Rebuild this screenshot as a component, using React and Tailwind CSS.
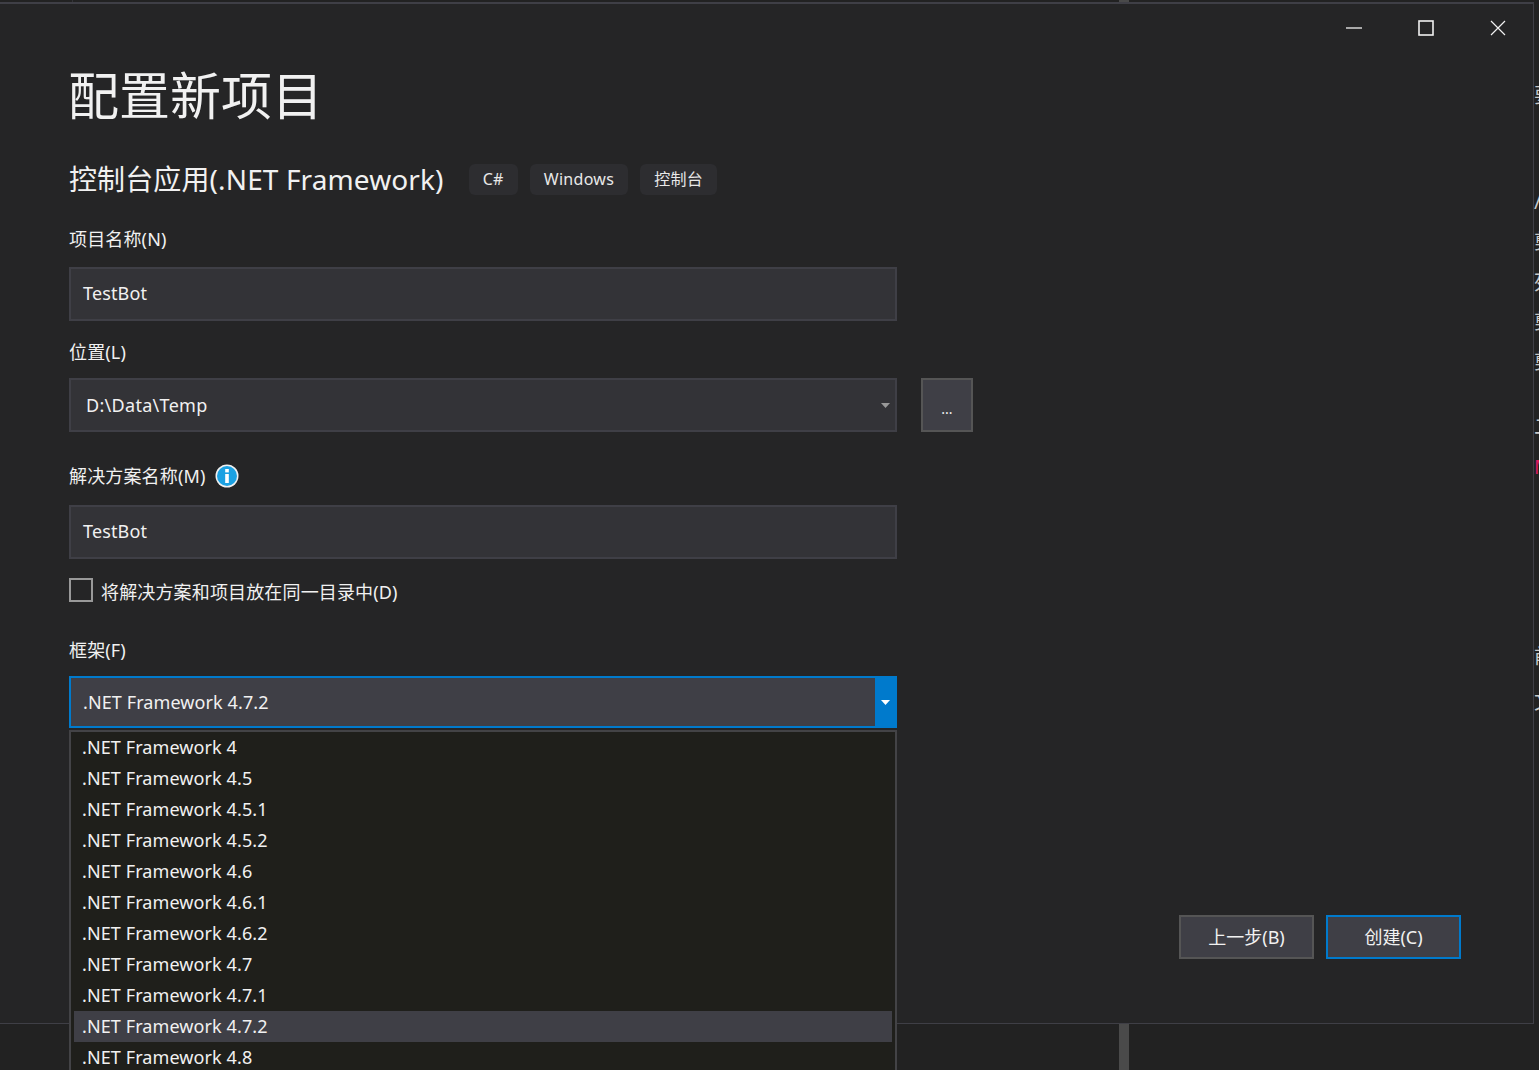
import React from "react";

const FONT = { fontFamily: '"Noto Sans", "Noto Sans CJK SC", sans-serif' };
const frameworks = ["4", "4.5", "4.5.1", "4.5.2", "4.6", "4.6.1", "4.6.2", "4.7", "4.7.1", "4.7.2", "4.8"];
const strip = [
  ["要", 84, "text-[#c8c8c8]"], ["/", 190, "text-[#c8c8c8]"], ["剪", 230, "text-[#c8c8c8]"], ["死", 271, "text-[#c8c8c8]"],
  ["剪", 310, "text-[#c8c8c8]"], ["剪", 350, "text-[#c8c8c8]"], ["二", 415, "text-[#c8c8c8]"], ["M", 455, "text-[#d81b60]"],
  ["前", 645, "text-[#c8c8c8]"], ["文", 690, "text-[#c8c8c8]"],
];

function Field({ children, right }) {
  return (
    <div className="h-[54px] w-[828px] border-2 border-[#3f3f46] bg-[#333337] flex items-center justify-between text-[18px] tracking-[0.15px] text-[#f1f1f1] pl-[12px] pr-[5px]">
      <span className="leading-none">{children}</span>
      {right}
    </div>
  );
}

function Label({ children }) {
  return <div className="h-[28px] text-[18px] leading-[28px] tracking-[0.15px] text-[#f1f1f1]">{children}</div>;
}

function Tag({ children }) {
  return <span className="h-[31px] flex items-center rounded-[6px] bg-[#2d2d30] px-[14px] text-[16px] tracking-[0.3px] text-[#e8e8e8]">{children}</span>;
}

function Caret({ color }) {
  return (
    <svg width="9" height="5" viewBox="0 0 9 5" className="shrink-0">
      <path d="M0 0H9L4.5 5Z" fill={color} />
    </svg>
  );
}

export default function App() {
  return (
    <div style={FONT} className="relative h-[1070px] w-full overflow-hidden bg-[#222222]">
      <div className="h-[2px] flex bg-[#222222]">
        <div className="ml-[72px] w-px bg-[#333337]" />
        <div className="ml-[1046px] w-[10px] bg-[#4a4a4a]" />
      </div>
      <div className="flex">
        <div className="relative h-[1022px] w-[1534px] shrink-0 border-t-2 border-r border-b border-[#3f3f46] bg-[#252526] pl-[69px] flex flex-col">
          <div className="absolute -right-px top-[6px] flex items-center text-[#f1f1f1]">
            <button className="w-[72px] h-[36px] flex items-center justify-center">
              <svg width="16" height="16" viewBox="0 0 16 16"><path d="M0 8H16" stroke="#f1f1f1" strokeWidth="1.3" /></svg>
            </button>
            <button className="w-[72px] h-[36px] flex items-center justify-center">
              <svg width="16" height="16" viewBox="0 0 16 16"><rect x="1" y="1" width="14" height="14" fill="none" stroke="#f1f1f1" strokeWidth="1.6" /></svg>
            </button>
            <button className="w-[72px] h-[36px] flex items-center justify-center">
              <svg width="16" height="16" viewBox="0 0 16 16"><path d="M1 1L15 15M15 1L1 15" stroke="#f1f1f1" strokeWidth="1.2" /></svg>
            </button>
          </div>

          <h1 className="mt-[55px] h-[72px] text-[51px] leading-[72px] text-[#f1f1f1] -ml-px">配置新项目</h1>

          <div className="mt-[28px] h-[40px] flex items-center">
            <span className="text-[28px] leading-[40px] tracking-[0.12px] text-[#f1f1f1]">控制台应用(.NET Framework)</span>
            <div className="ml-[25px] flex gap-[12px]">
              <Tag>C#</Tag>
              <Tag>Windows</Tag>
              <Tag>控制台</Tag>
            </div>
          </div>

          <div className="mt-[26px]"><Label>项目名称(N)</Label></div>
          <div className="mt-[14px]"><Field><span className="block mb-[2px]">TestBot</span></Field></div>

          <div className="mt-[17px]"><Label>位置(L)</Label></div>
          <div className="mt-[12px] flex items-center gap-[24px]">
            <Field right={<Caret color="#999999" />}><span className="ml-[3px] tracking-[0.3px]">D:\Data\Temp</span></Field>
            <div className="h-[54px] w-[52px] border-2 border-[#555555] bg-[#3f3f46] flex items-center justify-center text-[14px] text-[#f1f1f1] pt-[6px]">...</div>
          </div>

          <div className="mt-[30px] flex items-center gap-[10px]">
            <Label>解决方案名称(M)</Label>
            <svg width="24" height="24" viewBox="0 0 24 24" className="shrink-0">
              <circle cx="12" cy="12" r="11.5" fill="#f1f1f1" />
              <circle cx="12" cy="12" r="10" fill="#1ba1e2" />
              <rect x="10.2" y="5" width="3.6" height="3.4" fill="#ffffff" />
              <rect x="10.2" y="10" width="3.6" height="9" fill="#ffffff" />
            </svg>
          </div>
          <div className="mt-[15px]"><Field><span className="block mb-[2px]">TestBot</span></Field></div>

          <div className="mt-[19px] flex items-center gap-[8px] h-[24px]">
            <div className="h-[24px] w-[24px] border-2 border-[#999999]" />
            <span className="text-[18px] tracking-[0.15px] leading-[28px] text-[#f1f1f1] mt-[3px]">将解决方案和项目放在同一目录中(D)</span>
          </div>

          <div className="mt-[34px]"><Label>框架(F)</Label></div>
          <div className="mt-[12px] h-[52px] w-[828px] border-2 border-[#007acc] bg-[#3f3f46] flex items-center justify-between text-[18px] text-[#f1f1f1] pl-[12px]">
            <span className="tracking-[0.1px]">.NET Framework 4.7.2</span>
            <div className="h-full w-[20px] bg-[#007acc] flex items-center justify-center"><Caret color="#ffffff" /></div>
          </div>

          <div className="mt-auto mb-[64px] mr-[72px] flex justify-end gap-[12px]">
            <button className="h-[44px] w-[135px] border-2 border-[#555555] bg-[#3f3f46] text-[18px] text-[#f1f1f1]">上一步(B)</button>
            <button className="h-[44px] w-[135px] border-2 border-[#007acc] bg-[#3f3f46] text-[18px] text-[#f1f1f1]">创建(C)</button>
          </div>

          <div className="absolute left-[69px] top-[726px] w-[828px] border-2 border-[#434346] bg-[#1f1f1b] pl-[3px] pr-[3px] text-[18px] text-[#f1f1f1]">
            {frameworks.map((v) => (
              <div key={v} className={`h-[31px] pl-[8px] flex items-center tracking-[0.1px] ${v === "4.7.2" ? "bg-[#3f3f46]" : ""}`}>
                .NET Framework {v}
              </div>
            ))}
          </div>
        </div>
        <div className="relative w-[5px] h-[1022px] overflow-hidden">
          {strip.map(([c, y, col], i) => (
            <span key={i} className={`absolute left-0 text-[20px] leading-[24px] ${col}`} style={{ top: y - 2 }}>{c}</span>
          ))}
        </div>
      </div>
      <div className="flex h-[46px]">
        <div className="ml-[1119px] w-[10px] bg-[#4a4a4a]" />
      </div>
    </div>
  );
}
